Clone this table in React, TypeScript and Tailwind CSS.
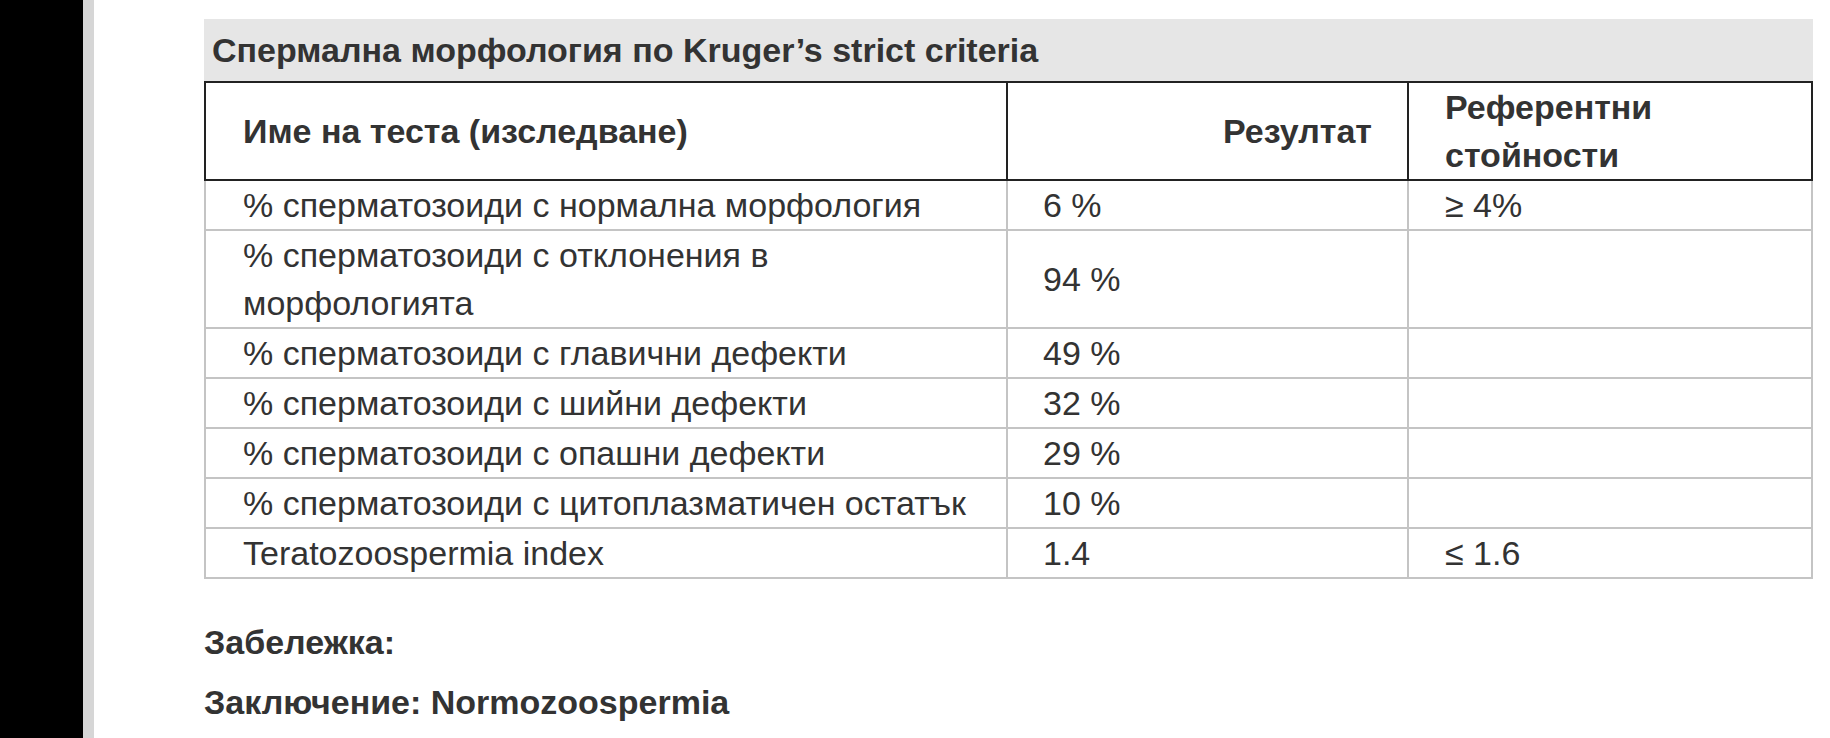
import React from "react";

type Row = {
  name: React.ReactNode;
  result: string;
  reference: string;
};

const rows: Row[] = [
  { name: "% сперматозоиди с нормална морфология", result: "6 %", reference: "≥ 4%" },
  {
    name: (
      <>
        % сперматозоиди с отклонения в
        <br />
        морфологията
      </>
    ),
    result: "94 %",
    reference: "",
  },
  { name: "% сперматозоиди с главични дефекти", result: "49 %", reference: "" },
  { name: "% сперматозоиди с шийни дефекти", result: "32 %", reference: "" },
  { name: "% сперматозоиди с опашни дефекти", result: "29 %", reference: "" },
  { name: "% сперматозоиди с цитоплазматичен остатък", result: "10 %", reference: "" },
  { name: "Teratozoospermia index", result: "1.4", reference: "≤ 1.6" },
];

export default function App() {
  return (
    <div className="flex h-[738px] w-full overflow-hidden bg-white font-['Liberation_Sans',Arial,sans-serif] text-[#333]">
      <div className="w-[83px] shrink-0 bg-black" />
      <div className="w-[11px] shrink-0 bg-[#d6d6d6]" />

      <main className="flex-1 pt-[19px] pl-[110px] pr-[19px]">
        <div className="flex h-[62px] items-center bg-[#e6e6e6] pl-[8px] text-[34px] font-bold">
          Спермална морфология по Kruger’s strict criteria
        </div>

        <table className="w-[1607px] table-fixed border-collapse text-[34px] leading-[48px]">
          <colgroup>
            <col className="w-[802px]" />
            <col className="w-[401px]" />
            <col className="w-[404px]" />
          </colgroup>
          <thead>
            <tr>
              <th className="border-2 border-[#222] pl-[37px] text-left align-middle font-bold">
                Име на теста (изследване)
              </th>
              <th className="border-2 border-[#222] pr-[35px] text-right align-middle font-bold">
                Резултат
              </th>
              <th className="border-2 border-[#222] pl-[36px] text-left align-middle font-bold">
                Референтни
                <br />
                стойности
              </th>
            </tr>
          </thead>
          <tbody>
            {rows.map((row, i) => (
              <tr key={i}>
                <td className="border-2 border-[#c4c4c4] pl-[37px] align-middle">{row.name}</td>
                <td className="border-2 border-[#c4c4c4] pl-[35px] align-middle">{row.result}</td>
                <td className="border-2 border-[#c4c4c4] pl-[36px] align-middle">{row.reference}</td>
              </tr>
            ))}
          </tbody>
        </table>

        <div className="mt-[33px] text-[34px] font-bold leading-[60px]">
          <p>Забележка:</p>
          <p>Заключение: Normozoospermia</p>
        </div>
      </main>
    </div>
  );
}
